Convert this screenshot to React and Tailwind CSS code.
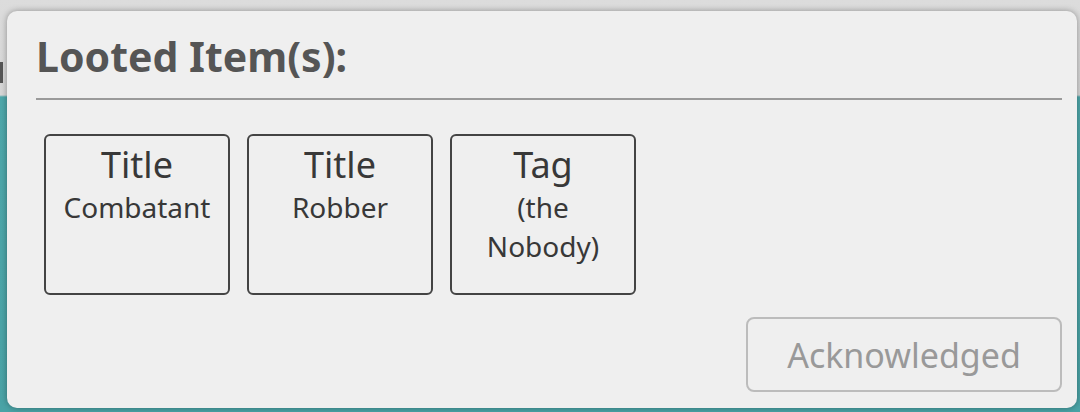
const items = [
  { kind: "Title", lines: ["Combatant"] },
  { kind: "Title", lines: ["Robber"] },
  { kind: "Tag", lines: ["(the", "Nobody)"] },
];

const LootDialog = () => {
  return (
    <div className="relative h-[412px] w-[1080px] overflow-hidden bg-[linear-gradient(to_bottom,#dcdcdc_0px,#d6d6d6_95px,#4ea7aa_97px,#4aa3a6_412px)] font-['Noto_Sans',sans-serif]">
      {/* peek of the screen underneath */}
      <div className="absolute left-0 top-[62px] h-[21px] w-[3px] bg-[#555]" />

      <div className="relative ml-[7px] mt-[11px] flex h-[397px] w-[1070px] flex-col rounded-[10px] bg-[#efefef] pl-[29px] pr-[15px] shadow-[0_0_6px_rgba(0,0,0,0.35)]">
        <h2 className="pt-[16px] text-[41px] font-bold leading-[58px] text-[#555]">Looted Item(s):</h2>
        <div className="mt-[13px] h-[2px] bg-[#9a9a9a]" />

        <div className="mt-[34px] flex gap-[17px] pl-[8px]">
          {items.map((item, i) => (
            <div
              key={i}
              className="flex h-[161px] w-[186px] flex-col items-center rounded-[6px] border-2 border-[#444] pt-[6px] text-center text-[#383838]"
            >
              <div className="text-[36px] leading-[46px]">{item.kind}</div>
              {item.lines.map((l) => (
                <div key={l} className="text-[28px] leading-[39px]">
                  {l}
                </div>
              ))}
            </div>
          ))}
        </div>

        <div className="mt-auto mb-[16px] flex justify-end">
          <button className="h-[75px] w-[316px] rounded-[8px] border-2 border-[#bcbcbc] pt-[2px] text-[34px] text-[#999]">
            Acknowledged
          </button>
        </div>
      </div>
    </div>
  );
};

export default function App() {
  return <LootDialog />;
}
